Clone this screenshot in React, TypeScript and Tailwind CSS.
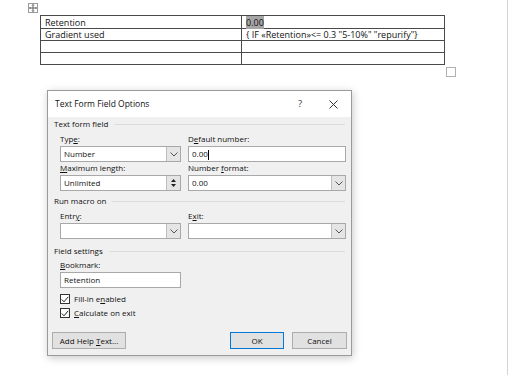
import type { ReactNode } from 'react'

function Chevron() {
  return (
    <div className="w-[14px] self-stretch bg-[#e5e5e5] border-l border-[#bdbdbd] flex items-center justify-center">
      <svg width="8" height="5" viewBox="0 0 8 5" fill="none" stroke="#555" strokeWidth="1">
        <path d="M0.5 0.5L4 4L7.5 0.5" />
      </svg>
    </div>
  )
}

function Spinner() {
  return (
    <div className="w-[14px] self-stretch bg-[#e5e5e5] border-l border-[#bdbdbd] flex flex-col items-center justify-center gap-[2px]">
      <svg width="5" height="3" viewBox="0 0 5 3" fill="#222"><path d="M0 3L2.5 0L5 3Z" /></svg>
      <svg width="5" height="3" viewBox="0 0 5 3" fill="#222"><path d="M0 0L2.5 3L5 0Z" /></svg>
    </div>
  )
}

function Field({ value, right, wide }: { value?: ReactNode; right?: ReactNode; wide?: boolean }) {
  return (
    <div className={`h-[16px] bg-white border border-[#a8a8a8] flex items-stretch ${wide ? 'w-[158px]' : 'w-[121px]'}`}>
      <div className="flex-1 pl-[3px] leading-[14px] text-[8px]">{value}</div>
      {right}
    </div>
  )
}

function Group({ title, className }: { title: string; className: string }) {
  return (
    <div className={`h-[12px] flex items-center gap-[6px] pl-[6px] pr-[6px] ${className}`}>
      <span className="text-[8px] text-[#111] whitespace-nowrap">{title}</span>
      <div className="flex-1 h-px bg-[#dcdcdc]" />
    </div>
  )
}

function Label({ children }: { children: ReactNode }) {
  return <span className="text-[8px] leading-[12px] h-[12px]">{children}</span>
}

function Check({ children }: { children: ReactNode }) {
  return (
    <div className="flex items-center gap-[4px] h-[14px]">
      <div className="w-[10px] h-[10px] border border-[#333] bg-white flex items-center justify-center">
        <svg width="8" height="7" viewBox="0 0 8 7" fill="none" stroke="#222" strokeWidth="1">
          <path d="M0.8 3.5L3 5.8L7.2 0.8" />
        </svg>
      </div>
      <span className="text-[8px]">{children}</span>
    </div>
  )
}

export default function App() {
  return (
    <div
      className="w-[508px] h-[375px] bg-white border-r border-[#d4d4d4] overflow-hidden text-[#111]"
      style={{ fontFamily: '"Open Sans", "Noto Sans", sans-serif' }}
    >
      <div className="relative ml-[40px] pt-[15px] w-[405px]">
        <div className="absolute left-[-12px] top-[3px] w-[10px] h-[10px] border border-[#9a9a9a] bg-white flex items-center justify-center">
          <svg width="8" height="8" viewBox="0 0 8 8" fill="none" stroke="#444" strokeWidth="0.8">
            <path d="M4 0.5V7.5M0.5 4H7.5M3 1.5L4 0.5L5 1.5M3 6.5L4 7.5L5 6.5M1.5 3L0.5 4L1.5 5M6.5 3L7.5 4L6.5 5" />
          </svg>
        </div>
        <table className="w-[405px] border-collapse text-[9px] leading-[11px]">
          <tbody>
            <tr className="h-[13px]">
              <td className="w-[201px] border border-[#4a4a4a] pl-[4px] py-0">Retention</td>
              <td className="border border-[#4a4a4a] pl-[4px] py-0"><span className="bg-[#a6a6a6]">0.00</span></td>
            </tr>
            <tr className="h-[12px]">
              <td className="border border-[#4a4a4a] pl-[4px] py-0">Gradient used</td>
              <td className="border border-[#4a4a4a] pl-[4px] py-0">{'{ IF «Retention»<= 0.3 "5-10%" "repurify"}'}</td>
            </tr>
            <tr className="h-[12px]">
              <td className="border border-[#4a4a4a]" />
              <td className="border border-[#4a4a4a]" />
            </tr>
            <tr className="h-[12px]">
              <td className="border border-[#4a4a4a]" />
              <td className="border border-[#4a4a4a]" />
            </tr>
          </tbody>
        </table>
        <div className="absolute right-[-11px] bottom-[-12px] w-[10px] h-[10px] border border-[#b0b0b0] bg-white" />
      </div>

      <div className="ml-[47px] mt-[25px] w-[305px] h-[266px] border border-[#9a9a9a] bg-[#f0f0f0] shadow-[1px_2px_8px_rgba(0,0,0,0.22)] flex flex-col">
        <div className="h-[26px] bg-white flex items-center pl-[7px] pr-[13px] text-[8.5px]">
          <span className="flex-1">Text Form Field Options</span>
          <span className="mr-[27px] text-[9.5px] text-[#333]">?</span>
          <svg width="9" height="9" viewBox="0 0 9 9" stroke="#333" strokeWidth="1">
            <path d="M0.5 0.5L8.5 8.5M8.5 0.5L0.5 8.5" />
          </svg>
        </div>

        <div className="flex flex-col">
          <Group title="Text form field" className="mt-[1px]" />
          <div className="grid grid-cols-[128px_158px] px-[12px] mt-[3px]">
            <Label>Typ<u>e</u>:</Label>
            <Label>D<u>e</u>fault number:</Label>
            <div className="mt-[1px]"><Field value="Number" right={<Chevron />} /></div>
            <div className="mt-[1px]">
              <Field wide value={<span>0.00<span className="inline-block w-px h-[10px] bg-black align-middle" /></span>} />
            </div>
            <Label><u>M</u>aximum length:</Label>
            <Label>Number <u>f</u>ormat:</Label>
            <div className="mt-[1px]"><Field value="Unlimited" right={<Spinner />} /></div>
            <div className="mt-[1px]"><Field wide value="0.00" right={<Chevron />} /></div>
          </div>

          <Group title="Run macro on" className="mt-[4px]" />
          <div className="grid grid-cols-[128px_158px] px-[12px] mt-[3px]">
            <Label>Entr<u>y</u>:</Label>
            <Label>E<u>x</u>it:</Label>
            <div className="mt-[1px]"><Field right={<Chevron />} /></div>
            <div className="mt-[1px]"><Field wide right={<Chevron />} /></div>
          </div>

          <Group title="Field settings" className="mt-[6px]" />
          <div className="flex flex-col px-[12px] mt-[2px]">
            <Label><u>B</u>ookmark:</Label>
            <div className="mt-[1px]"><Field value="Retention" /></div>
            <div className="mt-[4px] flex flex-col">
              <Check>Fill-in e<u>n</u>abled</Check>
              <Check><u>C</u>alculate on exit</Check>
            </div>
          </div>

          <div className="flex items-center px-[4px] mt-[12px] text-[8px]">
            <div className="w-[74px] h-[17px] border border-[#adadad] bg-[#e1e1e1] flex items-center justify-center">
              <span>Add Help <u>T</u>ext...</span>
            </div>
            <div className="flex-1" />
            <div className="w-[54px] h-[17px] border border-[#0078d7] bg-[#e1e1e1] flex items-center justify-center">OK</div>
            <div className="w-[55px] h-[17px] ml-[8px] border border-[#adadad] bg-[#e1e1e1] flex items-center justify-center">Cancel</div>
          </div>
        </div>
      </div>
    </div>
  )
}
